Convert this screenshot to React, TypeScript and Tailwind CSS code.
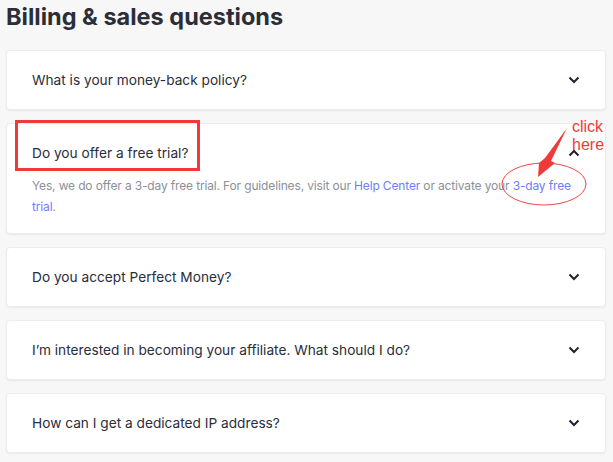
import React from "react";

const faqs = [
  "What is your money-back policy?",
  "Do you offer a free trial?",
  "Do you accept Perfect Money?",
  "I’m interested in becoming your affiliate. What should I do?",
  "How can I get a dedicated IP address?",
];

const Chevron: React.FC<{ up?: boolean }> = ({ up }) => (
  <svg width="12" height="8" viewBox="0 0 12 8" className="shrink-0">
    <path
      d={up ? "M1.5 6.5 L6 2 L10.5 6.5" : "M1.5 1.5 L6 6 L10.5 1.5"}
      fill="none"
      stroke="#1f2330"
      strokeWidth="2"
    />
  </svg>
);

const App: React.FC = () => {
  return (
    <div className="relative w-[613px] h-[462px] overflow-hidden bg-[#f7f7f7] font-['Inter','Liberation_Sans',sans-serif]">
      <div className="px-[6px] pt-[2px]">
        <h1 className="text-[23.5px] leading-[30px] font-bold text-[#2b2e38]">
          Billing &amp; sales questions
        </h1>

        <div className="mt-[18px] flex flex-col gap-[13px] w-[600px]">
          {faqs.map((q, i) =>
            i === 1 ? (
              <div
                key={q}
                className="bg-white rounded-[4px] border border-[#ececec] shadow-[0_1px_2px_rgba(0,0,0,0.06)] pl-[25px] pr-[25px] pt-[19px] pb-[16px]"
              >
                <div className="flex items-center justify-between h-[20px]">
                  <span className="text-[13.7px] text-[#2a2d3a]">{q}</span>
                  <Chevron up />
                </div>
                <p className="mt-[12px] text-[12px] tracking-[-0.15px] leading-[21px] text-[#8c909a]">
                  Yes, we do offer a 3-day free trial. For guidelines, visit our{" "}
                  <span className="text-[#6f7dff]">Help Center</span> or activate your{" "}
                  <span className="text-[#6f7dff]">3-day free trial</span>.
                </p>
              </div>
            ) : (
              <div
                key={q}
                className="bg-white rounded-[4px] border border-[#ececec] shadow-[0_1px_2px_rgba(0,0,0,0.06)] h-[60px] pl-[25px] pr-[25px] flex items-center justify-between"
              >
                <span className="text-[13.7px] text-[#2a2d3a]">{q}</span>
                <Chevron />
              </div>
            )
          )}
        </div>
      </div>

      {/* annotation: red box */}
      <div className="absolute left-[15px] top-[120px] w-[185px] h-[51px] border-[3px] border-[#f03a3a]" />

      {/* annotation: ellipse + arrow */}
      <svg className="absolute left-0 top-0" width="613" height="462">
        <ellipse cx="544" cy="184" rx="42" ry="21" fill="none" stroke="#f04545" strokeWidth="1" />
        <path d="M567 128 L551 161 L555 163 L538 177 L539 163 L545 158 Z" fill="#f03a3a" />
      </svg>

      <div className="absolute left-[572px] top-[118px] text-[16px] leading-[18px] text-[#f03a3a] font-['Liberation_Sans',sans-serif]">
        click
        <br />
        here
      </div>
    </div>
  );
};

export default App;
